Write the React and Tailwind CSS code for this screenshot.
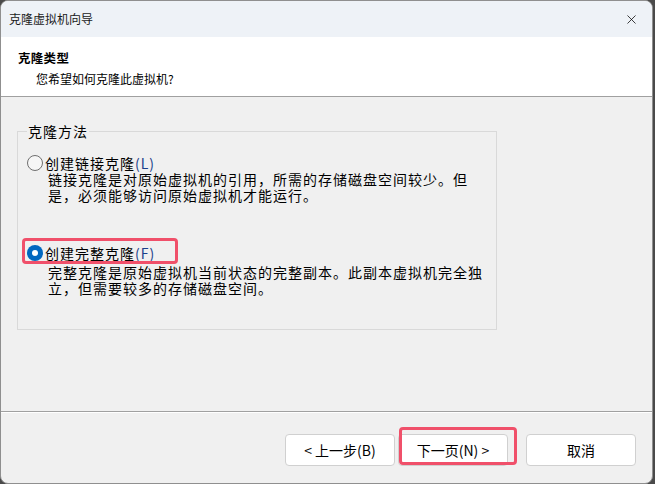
import { X } from 'lucide-react'

const FONT = "font-['Noto_Sans_CJK_SC','Noto_Sans',sans-serif]"

const Radio = ({ checked }) =>
  checked ? (
    <span className="w-[16px] h-[16px] rounded-full bg-[#0067c0] flex items-center justify-center shrink-0">
      <span className="w-[6px] h-[6px] rounded-full bg-white" />
    </span>
  ) : (
    <span className="w-[16px] h-[16px] rounded-full border border-[#6f6f6f] bg-[#f6f6f6] shrink-0" />
  )

const Option = ({ checked, label, hotkey, lines, highlight, descClass = '' }) => (
  <div>
    <div className="relative flex items-center gap-[2px] h-[16px]">
      <Radio checked={checked} />
      <span className="leading-[16px]">
        {label}
        <span className="text-[#1b3f8a]">({hotkey})</span>
      </span>
      {highlight && (
        <span className="absolute left-[-5px] top-[-7px] w-[156px] h-[26px] border-[3px] border-[#f0506a] rounded-[4px]" />
      )}
    </div>
    <div className={`ml-[21px] leading-[16px] ${descClass}`}>
      {lines.map(l => (
        <div key={l}>{l}</div>
      ))}
    </div>
  </div>
)

const Button = ({ children, highlight }) => (
  <div className="relative">
    <button className="w-[110px] h-[32px] bg-white border border-[#d0d0d0] rounded-[4px] text-[14px] text-black leading-none">
      {children}
    </button>
    {highlight && (
      <span className="absolute left-[1px] top-[-7px] w-[118px] h-[38px] border-[3px] border-[#f0506a] rounded-[4px]" />
    )}
  </div>
)

export default function App() {
  return (
    <div className={`w-[655px] h-[484px] bg-[#4a4a4a] ${FONT}`}>
      <div className="w-[653px] h-[484px] rounded-[8px] border border-[#8f8f8f] overflow-hidden flex flex-col bg-[#f0f0f0]">
        {/* Title bar */}
        <div className="h-[36px] bg-[#eef2f7] flex items-center justify-between pl-[8px] pr-[13px] shrink-0">
          <span className="text-[12px] text-[#1a1a1a] leading-[16px]">克隆虚拟机向导</span>
          <X size={15} strokeWidth={1.2} className="text-black" />
        </div>

        {/* Header */}
        <div className="h-[59px] bg-white pt-[13px] pl-[17px] shrink-0">
          <div className="text-[12.5px] font-bold leading-[16px] tracking-[0.3px] text-black">克隆类型</div>
          <div className="text-[12px] leading-[16px] mt-[5px] ml-[18px] text-black">您希望如何克隆此虚拟机?</div>
        </div>
        <div className="h-px bg-[#a0a0a0] shrink-0" />

        {/* Body */}
        <div className="h-[314px] pt-[26px] pl-[16px] shrink-0 text-[14px] tracking-[1px] text-black">
          <fieldset className="w-[480px] h-[207px] border border-[#d9d9d9] pl-[9px] pt-[16px]">
            <legend className="px-[1px] leading-[16px]">克隆方法</legend>
            <Option
              label="创建链接克隆"
              hotkey="L"
              lines={['链接克隆是对原始虚拟机的引用，所需的存储磁盘空间较少。但', '是，必须能够访问原始虚拟机才能运行。']}
            />
            <div className="h-[42px]" />
            <Option
              checked
              highlight
              label="创建完整克隆"
              hotkey="F"
              descClass="mt-[3px]"
              lines={['完整克隆是原始虚拟机当前状态的完整副本。此副本虚拟机完全独', '立，但需要较多的存储磁盘空间。']}
            />
          </fieldset>
        </div>

        {/* Footer */}
        <div className="h-px bg-[#a0a0a0] shrink-0" />
        <div className="h-px bg-white shrink-0" />
        <div className="flex-1 flex items-start pt-[21px] pl-[284px] gap-[3px]">
          <Button>&lt; 上一步(B)</Button>
          <Button highlight>下一页(N) &gt;</Button>
          <div className="ml-[15px]">
            <Button>取消</Button>
          </div>
        </div>
      </div>
    </div>
  )
}
